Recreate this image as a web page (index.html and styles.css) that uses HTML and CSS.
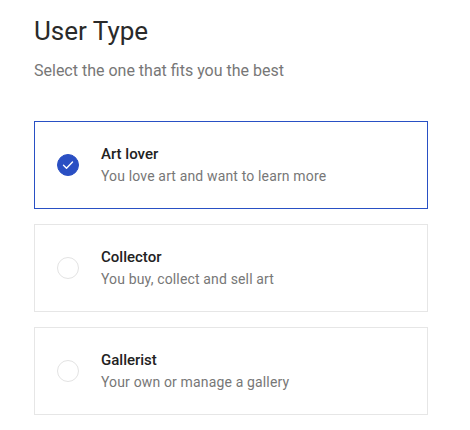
FILE: index.html
```html
<!DOCTYPE html>
<html>
<head>
<meta charset="utf-8">
<link rel="stylesheet" href="styles.css">
</head>
<body>
<main class="page">
  <h1 class="title">User Type</h1>
  <p class="subtitle">Select the one that fits you the best</p>
  <div class="options">
    <div class="option selected">
      <span class="radio checked">
        <svg viewBox="0 0 22 22" width="22" height="22"><path d="M6.5 11.3l3 3 6-6.2" fill="none" stroke="#fff" stroke-width="1.4" stroke-linecap="round" stroke-linejoin="round"/></svg>
      </span>
      <div class="text">
        <div class="name">Art lover</div>
        <div class="desc">You love art and want to learn more</div>
      </div>
    </div>
    <div class="option">
      <span class="radio"></span>
      <div class="text">
        <div class="name">Collector</div>
        <div class="desc">You buy, collect and sell art</div>
      </div>
    </div>
    <div class="option">
      <span class="radio"></span>
      <div class="text">
        <div class="name">Gallerist</div>
        <div class="desc">Your own or manage a gallery</div>
      </div>
    </div>
  </div>
</main>
</body>
</html>
```

FILE: styles.css
```css
* { box-sizing: border-box; }
html, body { margin: 0; padding: 0; background: #fff; }
body { font-family: Roboto, "Liberation Sans", sans-serif; color: #222; }
.page { padding: 14px 42px 0 34px; }
.title {
  margin: 0;
  font-size: 26px;
  font-weight: 400;
  line-height: 34px;
  color: #2a2a2a;
}
.subtitle {
  margin: 13px 0 0;
  font-size: 16px;
  line-height: 20px;
  color: #777;
}
.options {
  margin-top: 40px;
  display: flex;
  flex-direction: column;
  gap: 15px;
}
.option {
  height: 88px;
  border: 1px solid #e6e6e6;
  display: flex;
  align-items: center;
  padding-left: 22px;
}
.option.selected { border-color: #2950c4; }
.radio {
  width: 22px;
  height: 22px;
  border-radius: 50%;
  border: 1px solid #e3e3e3;
  flex: none;
  display: flex;
}
.radio.checked { background: #2a4fc3; border-color: #2a4fc3; }
.radio.checked svg { margin: -1px; }
.text { margin-left: 22px; }
.name {
  font-size: 15px;
  font-weight: 500;
  line-height: 20px;
  color: #222;
}
.desc {
  margin-top: 2px;
  font-size: 14px;
  letter-spacing: 0.15px;
  line-height: 20px;
  color: #777;
}
```
